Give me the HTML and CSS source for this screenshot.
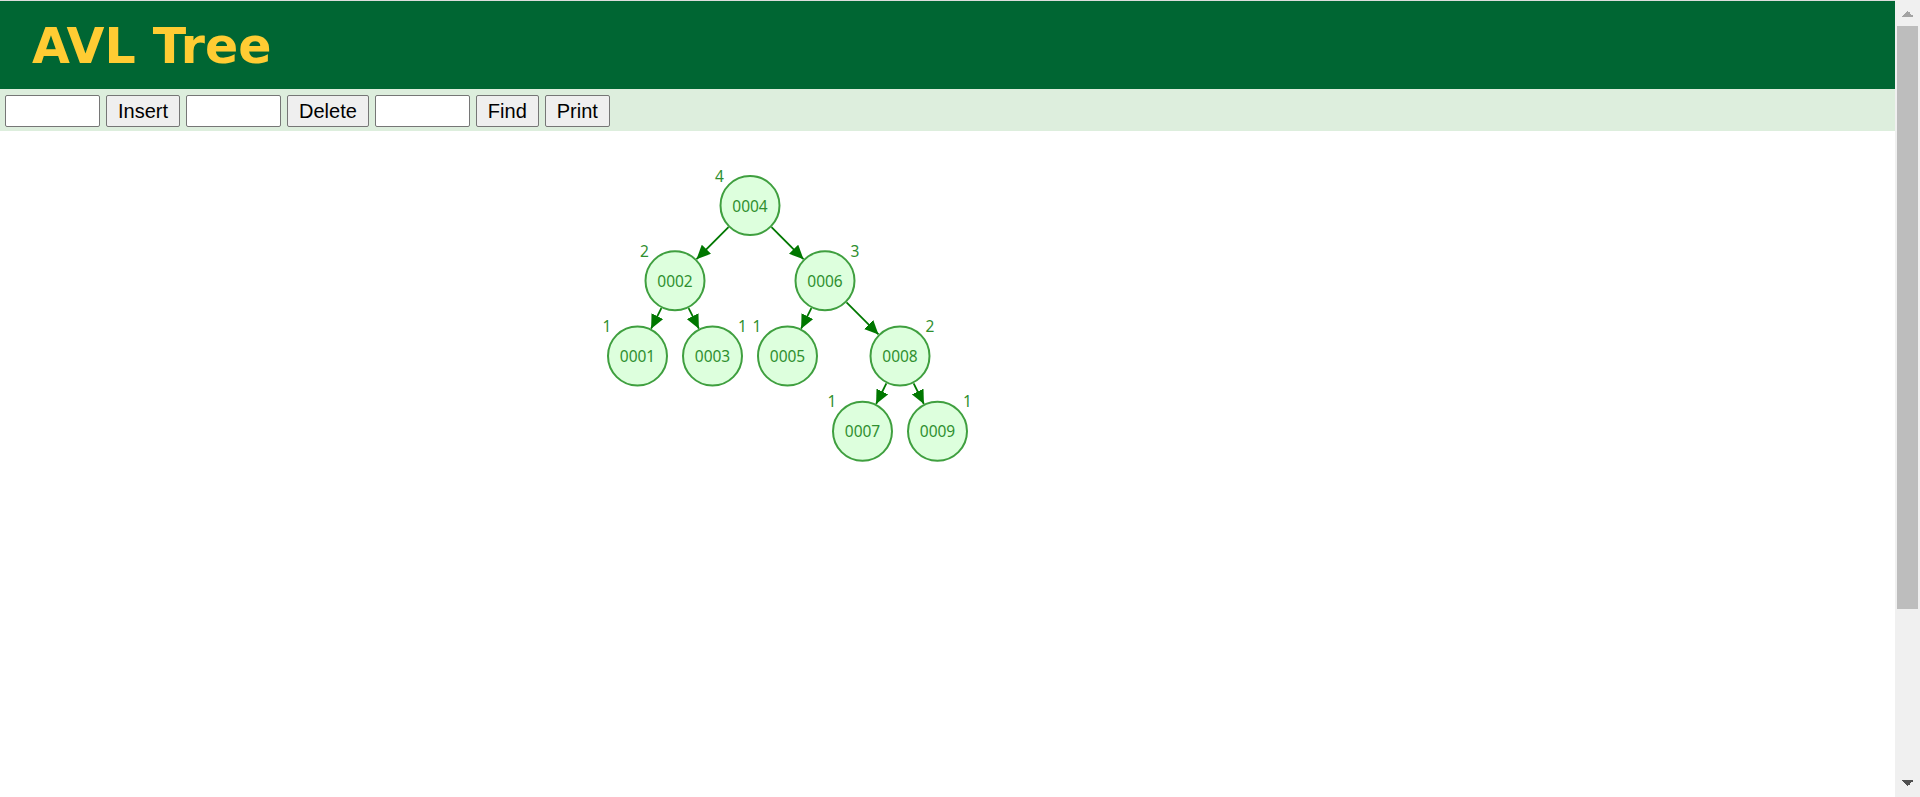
FILE: index.html
```html
<!DOCTYPE html>
<html lang="en">
<head>
    <meta charset="UTF-8">
    <meta name="viewport" content="width=device-width, initial-scale=1.0">
    <title>AVL Tree</title>
    <link rel="stylesheet" href="styles.css">
</head>
<body>

    <div class="page">
        <div class="header">
            <h1>AVL Tree</h1>
        </div>

        <div class="toolbar">
            <input type="text" id="insert-value">
            <button type="button">Insert</button>
            <input type="text" id="delete-value">
            <button type="button">Delete</button>
            <input type="text" id="find-value">
            <button type="button">Find</button>
            <button type="button">Print</button>
        </div>

        <div class="canvas">
            <svg class="tree" width="1000" height="600" viewBox="0 0 1000 600">
                <defs>
                    <marker id="arrow" markerUnits="userSpaceOnUse" markerWidth="14" markerHeight="13" refX="14" refY="6.5" orient="auto">
                        <path d="M0,0 L14,6.5 L0,13 z" class="arrow-head"/>
                    </marker>
                </defs>

                <!-- aristas -->
                <g class="edges">
                    <line x1="728.5" y1="96.1" x2="696.5" y2="128.2"/>
                    <line x1="771.5" y1="96.1" x2="803.5" y2="128.2"/>
                    <line x1="661.4" y1="177.1" x2="651.1" y2="197.7"/>
                    <line x1="688.6" y1="177.1" x2="698.9" y2="197.7"/>
                    <line x1="811.4" y1="177.1" x2="801.1" y2="197.7"/>
                    <line x1="846.5" y1="171.3" x2="878.5" y2="203.4"/>
                    <line x1="886.4" y1="252.3" x2="876.1" y2="273"/>
                    <line x1="913.6" y1="252.3" x2="923.9" y2="273"/>
                </g>

                <!-- nodos -->
                <g class="nodes">
                    <circle cx="750" cy="74.5" r="29.5"/>
                    <circle cx="675" cy="149.75" r="29.5"/>
                    <circle cx="825" cy="149.75" r="29.5"/>
                    <circle cx="637.5" cy="225" r="29.5"/>
                    <circle cx="712.5" cy="225" r="29.5"/>
                    <circle cx="787.5" cy="225" r="29.5"/>
                    <circle cx="900" cy="225" r="29.5"/>
                    <circle cx="862.5" cy="300.25" r="29.5"/>
                    <circle cx="937.5" cy="300.25" r="29.5"/>
                </g>

                <g class="keys">
                    <text x="750" y="74.5">0004</text>
                    <text x="675" y="149.75">0002</text>
                    <text x="825" y="149.75">0006</text>
                    <text x="637.5" y="225">0001</text>
                    <text x="712.5" y="225">0003</text>
                    <text x="787.5" y="225">0005</text>
                    <text x="900" y="225">0008</text>
                    <text x="862.5" y="300.25">0007</text>
                    <text x="937.5" y="300.25">0009</text>
                </g>

                <!-- alturas -->
                <g class="heights">
                    <text x="719.5" y="44.5">4</text>
                    <text x="644.5" y="119.75">2</text>
                    <text x="855" y="119.75">3</text>
                    <text x="607" y="195">1</text>
                    <text x="742.5" y="195">1</text>
                    <text x="757" y="195">1</text>
                    <text x="930" y="195">2</text>
                    <text x="832" y="270.25">1</text>
                    <text x="967.5" y="270.25">1</text>
                </g>
            </svg>
        </div>
    </div>

    <div class="scrollbar">
        <div class="scroll-btn up"></div>
        <div class="scroll-track">
            <div class="scroll-thumb"></div>
        </div>
        <div class="scroll-btn down"></div>
    </div>

</body>
</html>
```

FILE: styles.css
```css
html, body {
    height: 100%;
    overflow: hidden;
}

body {
    margin: 0;
    display: flex;
    font-family: "Liberation Sans", Arial, sans-serif;
    background-color: white;
}

.page {
    flex: 1;
    min-width: 0;
}

.header {
    height: 89px;
    padding: 4px 0 0 32px;
    box-sizing: border-box;
    border-top: 1px solid #dddddd;
    background-color: #006633;
}

.header h1 {
    margin: 0;
    font-family: "DejaVu Sans", Verdana, sans-serif;
    font-size: 49px;
    font-weight: bold;
    line-height: 84px;
    color: #ffcc33;
}

.toolbar {
    display: flex;
    align-items: flex-start;
    gap: 6px;
    height: 42px;
    padding: 6px 0 0 5px;
    box-sizing: border-box;
    background-color: #ddeedd;
}

.toolbar input {
    width: 95px;
    height: 32px;
    margin: 0;
    padding: 0 4px;
    box-sizing: border-box;
    border: 1px solid #767676;
    border-radius: 2px;
    background-color: white;
    font-family: "Liberation Sans", Arial, sans-serif;
    font-size: 18px;
}

.toolbar button {
    height: 32px;
    margin: 0;
    padding: 0 11px;
    box-sizing: border-box;
    border: 1px solid #767676;
    border-radius: 2px;
    background-color: #efefef;
    color: black;
    font-family: "Liberation Sans", Arial, sans-serif;
    font-size: 20px;
    cursor: pointer;
}

.tree {
    display: block;
}

.edges line {
    stroke: #007700;
    stroke-width: 1.8;
    marker-end: url(#arrow);
}

.arrow-head {
    fill: #007700;
}

.nodes circle {
    fill: #ddffdd;
    stroke: #3f9f3f;
    stroke-width: 2;
}

.keys text, .heights text {
    font-family: "Noto Sans", "Open Sans", sans-serif;
    font-size: 15.5px;
    fill: #2f8f2f;
    text-anchor: middle;
    dominant-baseline: central;
}

/* barra de desplazamiento */
.scrollbar {
    width: 25px;
    display: flex;
    flex-direction: column;
    background-color: #f0f0f0;
}

.scroll-btn {
    height: 25px;
    background-repeat: no-repeat;
    background-size: 6px 6px;
}

.scroll-btn.up {
    background-image:
        linear-gradient(to bottom right, transparent 50%, #a3a3a3 50%),
        linear-gradient(to bottom left, transparent 50%, #a3a3a3 50%);
    background-position: 7px 11px, 13px 11px;
}

.scroll-btn.down {
    background-image:
        linear-gradient(to top right, transparent 50%, #505050 50%),
        linear-gradient(to top left, transparent 50%, #505050 50%);
    background-position: 7px 8px, 13px 8px;
}

.scroll-track {
    flex: 1;
    padding: 1px 2px 0 2px;
}

.scroll-thumb {
    height: 583px;
    background-color: #bdbdbd;
}
```
